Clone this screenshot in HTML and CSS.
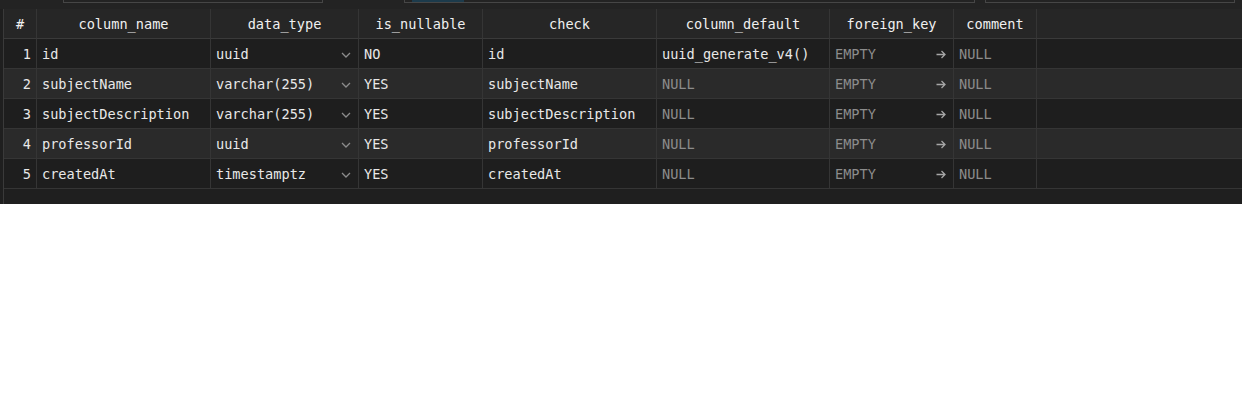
FILE: index.html
```html
<!DOCTYPE html>
<html>
<head>
<meta charset="utf-8">
<link rel="stylesheet" href="styles.css">
</head>
<body>
<div class="panel">
  <div class="toolbar">
    <div class="box box1"></div>
    <div class="box box2"><div class="fill"></div></div>
    <div class="box box3"></div>
  </div>
  <div class="grid">
    <div class="row head">
      <div class="c c-num">#</div>
      <div class="c">column_name</div>
      <div class="c">data_type</div>
      <div class="c">is_nullable</div>
      <div class="c">check</div>
      <div class="c">column_default</div>
      <div class="c">foreign_key</div>
      <div class="c">comment</div>
      <div class="c c-rest"></div>
    </div>

    <div class="row odd">
      <div class="c c-num">1</div>
      <div class="c">id</div>
      <div class="c sel"><span>uuid</span><svg class="chev" width="10" height="6" viewBox="0 0 10 6"><path d="M1 1 L5 5 L9 1" fill="none" stroke="#8c8c8c" stroke-width="1.3"/></svg></div>
      <div class="c">NO</div>
      <div class="c">id</div>
      <div class="c">uuid_generate_v4()</div>
      <div class="c sel dim"><span>EMPTY</span><svg class="arrow" width="10" height="9" viewBox="0 0 10 9"><path d="M0.5 4.5 H9 M5.5 1 L9 4.5 L5.5 8" fill="none" stroke="#a6a6a6" stroke-width="1.3"/></svg></div>
      <div class="c dim">NULL</div>
      <div class="c c-rest"></div>
    </div>

    <div class="row even">
      <div class="c c-num">2</div>
      <div class="c">subjectName</div>
      <div class="c sel"><span>varchar(255)</span><svg class="chev" width="10" height="6" viewBox="0 0 10 6"><path d="M1 1 L5 5 L9 1" fill="none" stroke="#8c8c8c" stroke-width="1.3"/></svg></div>
      <div class="c">YES</div>
      <div class="c">subjectName</div>
      <div class="c dim">NULL</div>
      <div class="c sel dim"><span>EMPTY</span><svg class="arrow" width="10" height="9" viewBox="0 0 10 9"><path d="M0.5 4.5 H9 M5.5 1 L9 4.5 L5.5 8" fill="none" stroke="#a6a6a6" stroke-width="1.3"/></svg></div>
      <div class="c dim">NULL</div>
      <div class="c c-rest"></div>
    </div>

    <div class="row odd">
      <div class="c c-num">3</div>
      <div class="c">subjectDescription</div>
      <div class="c sel"><span>varchar(255)</span><svg class="chev" width="10" height="6" viewBox="0 0 10 6"><path d="M1 1 L5 5 L9 1" fill="none" stroke="#8c8c8c" stroke-width="1.3"/></svg></div>
      <div class="c">YES</div>
      <div class="c">subjectDescription</div>
      <div class="c dim">NULL</div>
      <div class="c sel dim"><span>EMPTY</span><svg class="arrow" width="10" height="9" viewBox="0 0 10 9"><path d="M0.5 4.5 H9 M5.5 1 L9 4.5 L5.5 8" fill="none" stroke="#a6a6a6" stroke-width="1.3"/></svg></div>
      <div class="c dim">NULL</div>
      <div class="c c-rest"></div>
    </div>

    <div class="row even">
      <div class="c c-num">4</div>
      <div class="c">professorId</div>
      <div class="c sel"><span>uuid</span><svg class="chev" width="10" height="6" viewBox="0 0 10 6"><path d="M1 1 L5 5 L9 1" fill="none" stroke="#8c8c8c" stroke-width="1.3"/></svg></div>
      <div class="c">YES</div>
      <div class="c">professorId</div>
      <div class="c dim">NULL</div>
      <div class="c sel dim"><span>EMPTY</span><svg class="arrow" width="10" height="9" viewBox="0 0 10 9"><path d="M0.5 4.5 H9 M5.5 1 L9 4.5 L5.5 8" fill="none" stroke="#a6a6a6" stroke-width="1.3"/></svg></div>
      <div class="c dim">NULL</div>
      <div class="c c-rest"></div>
    </div>

    <div class="row odd">
      <div class="c c-num">5</div>
      <div class="c">createdAt</div>
      <div class="c sel"><span>timestamptz</span><svg class="chev" width="10" height="6" viewBox="0 0 10 6"><path d="M1 1 L5 5 L9 1" fill="none" stroke="#8c8c8c" stroke-width="1.3"/></svg></div>
      <div class="c">YES</div>
      <div class="c">createdAt</div>
      <div class="c dim">NULL</div>
      <div class="c sel dim"><span>EMPTY</span><svg class="arrow" width="10" height="9" viewBox="0 0 10 9"><path d="M0.5 4.5 H9 M5.5 1 L9 4.5 L5.5 8" fill="none" stroke="#a6a6a6" stroke-width="1.3"/></svg></div>
      <div class="c dim">NULL</div>
      <div class="c c-rest"></div>
    </div>
    <div class="filler"></div>
  </div>
</div>
</body>
</html>
```

FILE: styles.css
```css
html, body {
  margin: 0;
  padding: 0;
  background: #ffffff;
}
body {
  font-family: "DejaVu Sans Mono", "Liberation Mono", monospace;
  font-size: 13.6px;
}
.panel {
  width: 1242px;
  height: 204px;
  background: #1f1f1f;
  overflow: hidden;
}
.toolbar {
  height: 9px;
  display: flex;
  align-items: flex-start;
  padding-left: 63px;
  background: #232323;
}
.box {
  box-sizing: border-box;
  height: 3px;
  border: 1px solid #464646;
  border-top: none;
}
.box1 { width: 260px; }
.box2 {
  width: 571px;
  margin-left: 81px;
  padding-left: 7px;
}
.box2 .fill {
  width: 52px;
  height: 2px;
  background: #1c3b4c;
}
.box3 {
  width: 250px;
  margin-left: 10px;
}
.grid {
  margin-left: 3px;
  border-left: 1px solid #3a3a3a;
}
.row {
  display: grid;
  grid-template-columns: 33px 174px 148px 124px 174px 173px 124px 83px 1fr;
  height: 30px;
}
.c {
  border-right: 1px solid #353535;
  border-bottom: 1px solid #353535;
  padding: 0 5px;
  display: flex;
  align-items: center;
  color: #e8e8e8;
  white-space: nowrap;
  overflow: hidden;
  box-sizing: border-box;
}
.c-rest { border-right: none; }
.head { background: #262626; }
.head .c {
  justify-content: center;
  color: #f0f0f0;
  border-bottom-color: #3a3a3a;
}
.head .c-num { justify-content: center; }
.odd { background: #1e1e1e; }
.even { background: #2a2a2a; }
.c-num {
  justify-content: flex-end;
  padding-right: 5px;
}
.sel {
  justify-content: space-between;
  padding-right: 7px;
}
.chev { margin-top: 2px; }
.dim { color: #8c8c8c; }
.arrow { margin-top: 1px; }
.filler {
  height: 15px;
  background: #1f1f1f;
}
```
